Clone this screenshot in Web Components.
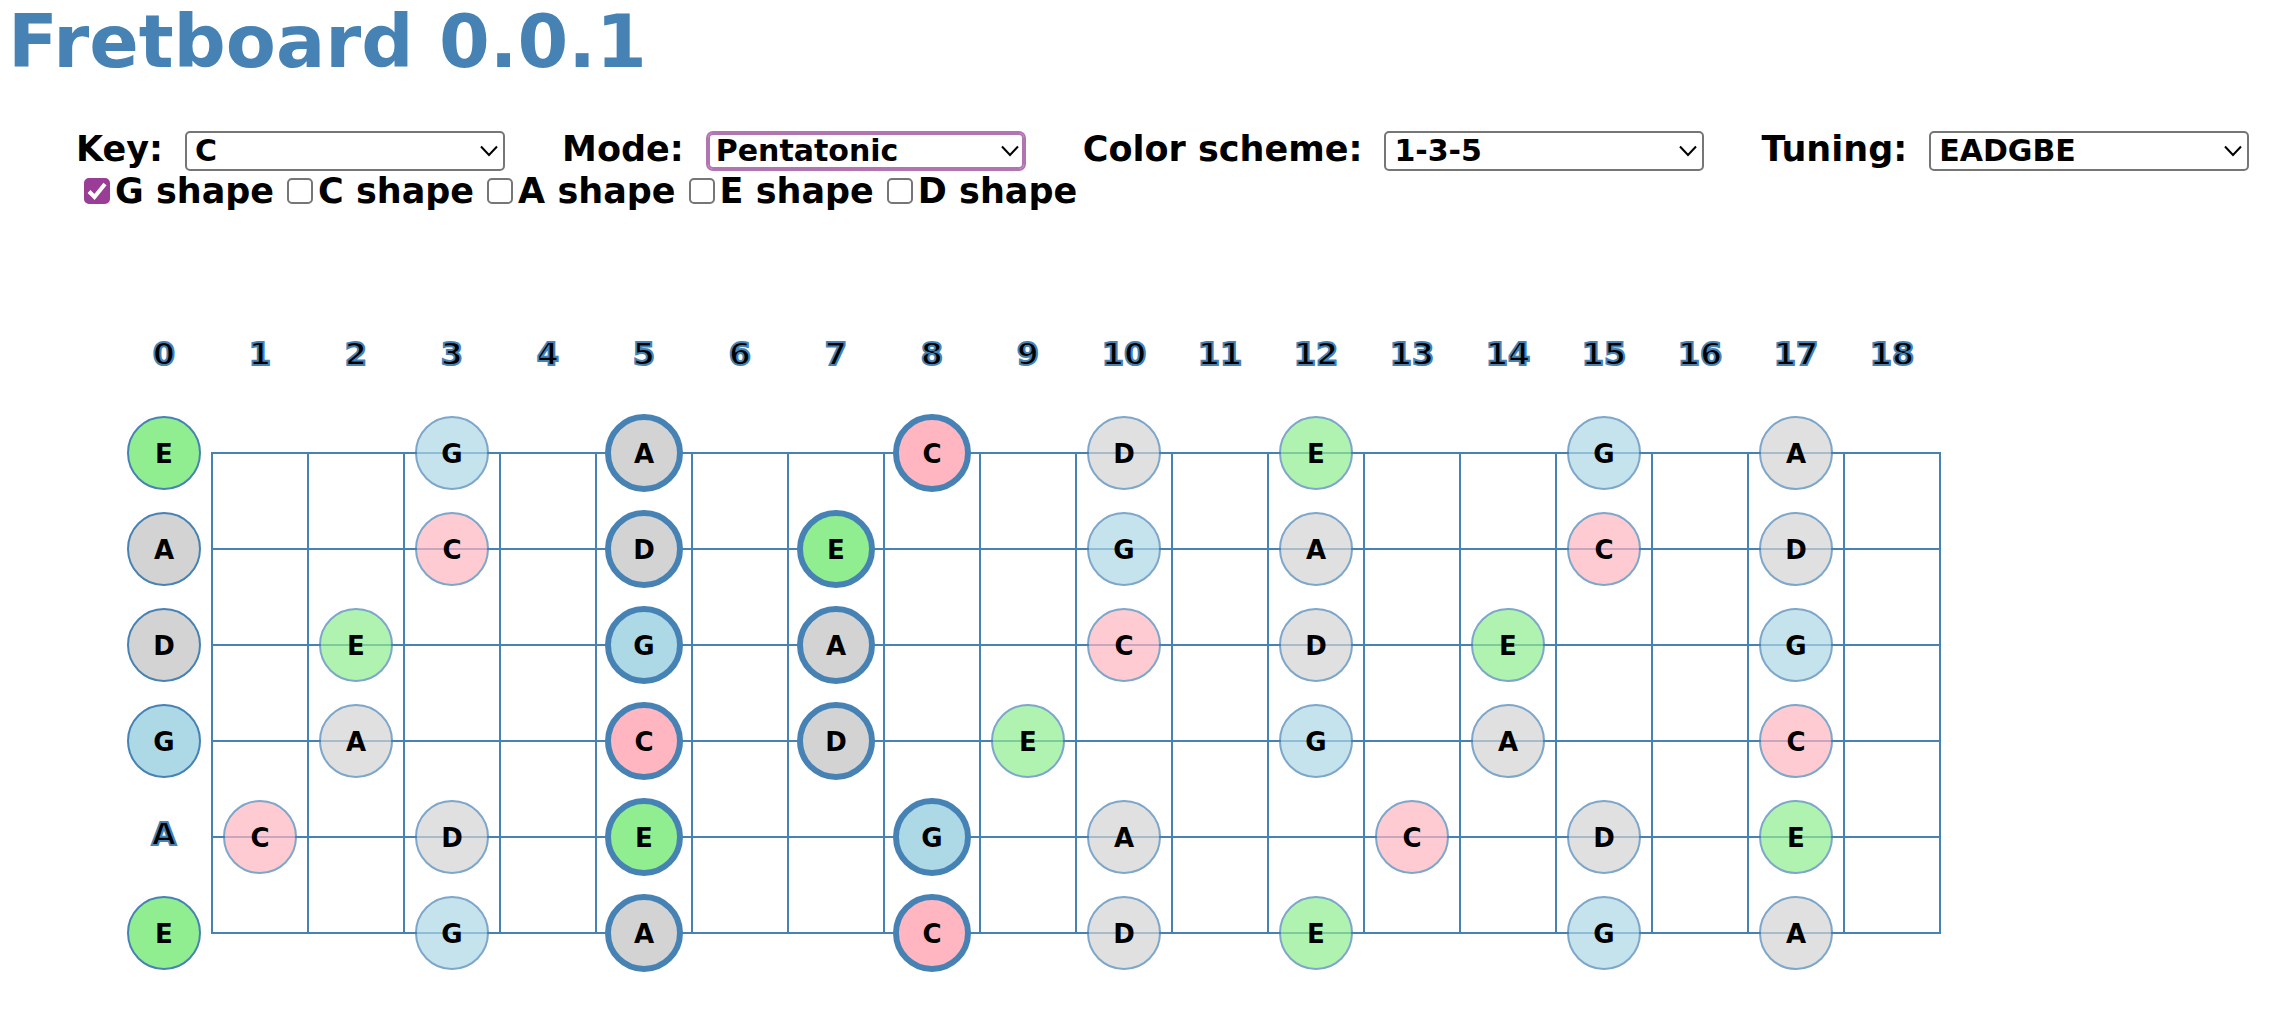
<!DOCTYPE html>
<html lang="en">
<head>
<meta charset="utf-8">
<title>Fretboard</title>
<style>
  body {
    margin: 0;
    background: #fff;
    color: #000;
    font-family: "DejaVu Sans", Verdana, sans-serif;
    font-weight: 700;
  }
</style>
</head>
<body>
<fretboard-app></fretboard-app>

<template id="app-template">
  <style>
    :host { display: flex; flex-direction: column; align-items: flex-start; }
    h1 { margin: 0; padding: 0 8px; font-size: 73px; line-height: 84px; color: steelblue; }
    form { display: flex; flex-direction: column; margin-top: 45px; padding-left: 76px; }
    .pickers { display: flex; align-items: baseline; gap: 57px; }
    .shapes { display: flex; align-items: center; gap: 13px; padding-left: 8px; }
    fret-board { margin-top: 98px; margin-left: 116px; }
  </style>
  <h1>Fretboard 0.0.1</h1>
  <form>
    <div class="pickers">
      <pick-list label="Key:" options="C,G,D,A,E"></pick-list>
      <pick-list label="Mode:" options="Pentatonic,Ionian,Aeolian" active></pick-list>
      <pick-list label="Color scheme:" options="1-3-5,None"></pick-list>
      <pick-list label="Tuning:" options="EADGBE,DADGBE"></pick-list>
    </div>
    <div class="shapes">
      <shape-toggle checked>G shape</shape-toggle>
      <shape-toggle>C shape</shape-toggle>
      <shape-toggle>A shape</shape-toggle>
      <shape-toggle>E shape</shape-toggle>
      <shape-toggle>D shape</shape-toggle>
    </div>
  </form>
  <fret-board></fret-board>
</template>

<template id="pick-template">
  <style>
    :host { display: flex; align-items: baseline; gap: 22px; }
    label { font-size: 35px; line-height: 40px; white-space: nowrap; }
    .box { display: grid; }
    select, svg { grid-area: 1 / 1; }
    select {
      appearance: none;
      box-sizing: border-box;
      width: 320px;
      height: 40px;
      margin: 0;
      padding: 0 32px 0 8px;
      border: 2px solid #767676;
      border-radius: 5px;
      outline: none;
      background: #fff;
      color: #000;
      font: inherit;
      font-size: 30px;
    }
    :host([active]) select { border-color: #b175b1; border-radius: 7px; box-shadow: inset 0 0 0 2px #b175b1; }
    svg { justify-self: end; align-self: center; margin-right: 7px; pointer-events: none; }
  </style>
  <label for="choice"></label>
  <span class="box">
    <select id="choice"></select>
    <svg width="18" height="12" viewBox="0 0 18 12" fill="none" stroke="#000" stroke-width="2"><path d="M1 1.5 9 10 17 1.5"/></svg>
  </span>
</template>

<template id="toggle-template">
  <style>
    :host { display: block; }
    label { display: flex; align-items: center; gap: 5px; font-size: 35px; line-height: 40px; white-space: nowrap; }
    .box { display: grid; }
    input, svg { grid-area: 1 / 1; }
    input {
      appearance: none;
      box-sizing: border-box;
      width: 26px;
      height: 26px;
      margin: 0;
      border: 2px solid #767676;
      border-radius: 5px;
      background: #fff;
    }
    input:checked { border-color: #993d96; background: #993d96; }
    svg { visibility: hidden; pointer-events: none; }
    input:checked + svg { visibility: visible; }
  </style>
  <label>
    <span class="box">
      <input type="checkbox">
      <svg width="26" height="26" viewBox="0 0 26 26" fill="none" stroke="#fff" stroke-width="4"><path d="M5 13.5 10.5 19 21 6"/></svg>
    </span>
    <slot></slot>
  </label>
</template>

<template id="board-template">
  <style>
    :host { display: block; }
    svg { display: block; font: inherit; }
    text { text-anchor: middle; font-size: 26px; fill: #000; }
    .outlined { font-size: 32px; stroke: steelblue; stroke-width: 2px; }
    .wire { stroke: steelblue; stroke-width: 2px; stroke-linecap: square; }
    circle { stroke: steelblue; stroke-width: 2px; fill: lightgray; opacity: .7; }
    circle.open { opacity: 1; }
    circle.shape { opacity: 1; stroke-width: 6px; }
    circle.C { fill: lightpink; }
    circle.E { fill: lightgreen; }
    circle.G { fill: lightblue; }
  </style>
  <svg width="1840" height="672" viewBox="0 0 1840 672" role="img" aria-label="Guitar fretboard"></svg>
</template>

<script>
  const stamp = (host, id) => {
    const root = host.attachShadow({ mode: "open" });
    root.append(document.getElementById(id).content.cloneNode(true));
    return root;
  };

  class PickList extends HTMLElement {
    connectedCallback() {
      if (this.shadowRoot) return;
      const root = stamp(this, "pick-template");
      root.querySelector("label").textContent = this.getAttribute("label");
      const select = root.querySelector("select");
      for (const name of this.getAttribute("options").split(",")) select.add(new Option(name));
    }
  }

  class ShapeToggle extends HTMLElement {
    connectedCallback() {
      if (this.shadowRoot) return;
      stamp(this, "toggle-template").querySelector("input").checked = this.hasAttribute("checked");
    }
  }

  const CELL = 96;
  const LAST_FRET = 18;
  // Notes by string, top to bottom; "*" marks a note of the selected shape.
  const STRINGS = [
    "0E 3G 5A* 8C* 10D 12E 15G 17A",
    "0A 3C 5D* 7E* 10G 12A 15C 17D",
    "0D 2E 5G* 7A* 10C 12D 14E 17G",
    "0G 2A 5C* 7D* 9E 12G 14A 17C",
    "1C 3D 5E* 8G* 10A 13C 15D 17E",
    "0E 3G 5A* 8C* 10D 12E 15G 17A"
  ];

  class FretBoard extends HTMLElement {
    connectedCallback() {
      if (this.shadowRoot) return;
      const svg = stamp(this, "board-template").querySelector("svg");
      const x = fret => CELL / 2 + fret * CELL;
      const y = row => CELL / 2 + row * CELL;
      const text = (cx, cy, value, cls = "") => `<text class="${cls}" x="${cx}" y="${cy}">${value}</text>`;
      let out = "";
      for (let fret = 0; fret <= LAST_FRET; fret++) {
        out += text(x(fret), y(0) + 8, fret, "outlined");
        const edge = (fret + 1) * CELL;
        out += `<line class="wire" x1="${edge}" x2="${edge}" y1="${y(1)}" y2="${y(6)}"/>`;
      }
      for (let row = 1; row <= 6; row++)
        out += `<line class="wire" x1="${CELL}" x2="${(LAST_FRET + 1) * CELL}" y1="${y(row)}" y2="${y(row)}"/>`;
      STRINGS.forEach((notes, i) => {
        for (const [, fret, note, star] of notes.matchAll(/(\d+)([A-G])(\*?)/g)) {
          const state = star ? "shape" : fret === "0" ? "open" : "";
          out += `<circle class="${note} ${state}" cx="${x(+fret)}" cy="${y(i + 1)}" r="36"/>`;
          out += text(x(+fret), y(i + 1) + 10, note);
        }
      });
      out += text(x(0), y(5) + 8, "A", "outlined");
      svg.innerHTML = out;
    }
  }

  class FretboardApp extends HTMLElement {
    connectedCallback() {
      if (!this.shadowRoot) stamp(this, "app-template");
    }
  }

  customElements.define("pick-list", PickList);
  customElements.define("shape-toggle", ShapeToggle);
  customElements.define("fret-board", FretBoard);
  customElements.define("fretboard-app", FretboardApp);
</script>
</body>
</html>
